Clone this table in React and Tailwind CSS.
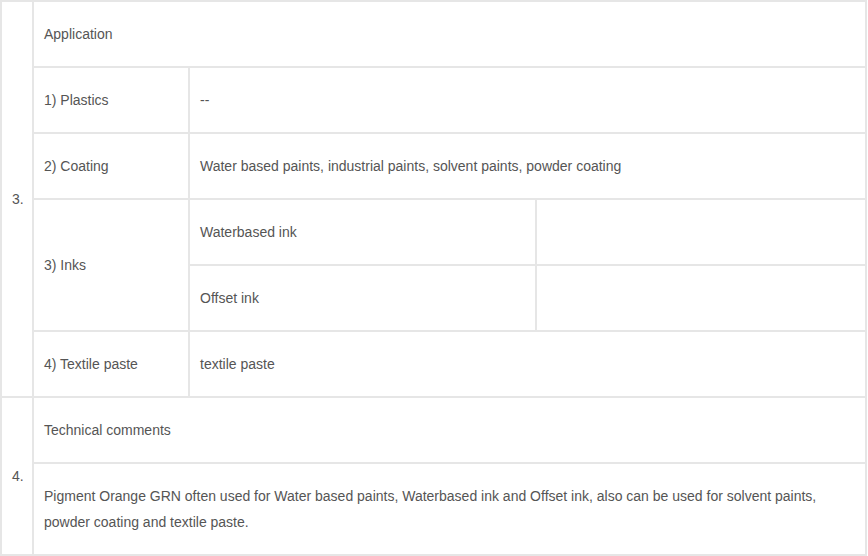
export default function App() {
  const td = 'border-r-2 border-b-2 border-[#e6e6e6] px-[10px] py-[19px] leading-[26px] align-middle';

  return (
    <div className="w-[868px] bg-white text-[14px] text-[#555]" style={{ fontFamily: '"Liberation Sans", Arial, sans-serif' }}>
      <table className="w-[867px] table-fixed border-separate border-spacing-0 border-t-2 border-l-2 border-[#e6e6e6]">
        <colgroup>
          <col className="w-[32px]" />
          <col className="w-[156px]" />
          <col className="w-[347px]" />
          <col className="w-[330px]" />
        </colgroup>
        <tbody>
          {/* Application */}
          <tr>
            <td rowSpan={6} className={td}>3.</td>
            <td colSpan={3} className={td}>Application</td>
          </tr>
          <tr>
            <td className={td}>1) Plastics</td>
            <td colSpan={2} className={td}>--</td>
          </tr>
          <tr>
            <td className={td}>2) Coating</td>
            <td colSpan={2} className={td}>Water based paints, industrial paints, solvent paints, powder coating</td>
          </tr>
          <tr>
            <td rowSpan={2} className={td}>3) Inks</td>
            <td className={td}>Waterbased ink</td>
            <td className={td}></td>
          </tr>
          <tr>
            <td className={td}>Offset ink</td>
            <td className={td}></td>
          </tr>
          <tr>
            <td className={td}>4) Textile paste</td>
            <td colSpan={2} className={td}>textile paste</td>
          </tr>

          {/* Technical comments */}
          <tr>
            <td rowSpan={2} className={td}>4.</td>
            <td colSpan={3} className={td}>Technical comments</td>
          </tr>
          <tr>
            <td colSpan={3} className={td}>
              Pigment Orange GRN often used for Water based paints, Waterbased ink and Offset ink, also can be used for solvent paints, powder coating and textile paste.
            </td>
          </tr>
        </tbody>
      </table>
    </div>
  );
}
